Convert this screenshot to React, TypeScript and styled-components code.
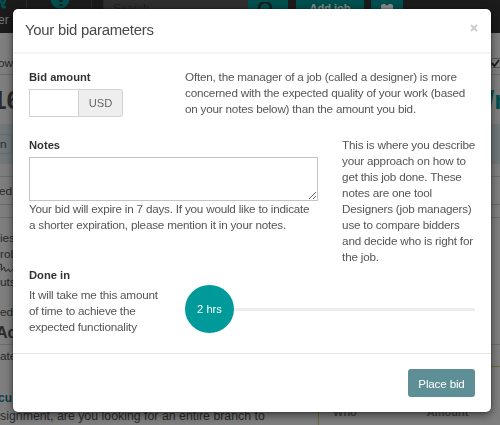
import React from "react";
import styled, { createGlobalStyle } from "styled-components";

const Global = createGlobalStyle`
  * { box-sizing: border-box; }
  html, body { margin: 0; height: 100%; overflow: hidden; }
  body { background: #7f7f7f; font-family: "Liberation Sans", Arial, sans-serif; font-size: 11.2px; line-height: 16px; color: #555; }
`;

const Page = styled.div`
  height: 425px;
  overflow: hidden;
  color: #2a2a2a;
`;
const Navbar = styled.div`
  display: flex;
  height: 33px;
  background: #1b1b1b;
`;
const NavItem = styled.div<{ $w: number }>`
  width: ${p => p.$w}px;
  height: 33px;
  border-right: 1px solid #292929;
  color: #777;
  display: flex;
  flex-direction: column;
  align-items: center;
  overflow: hidden;
`;
const NavLabel = styled.span`
  align-self: flex-start;
  font-size: 12px;
  line-height: 16px;
  margin-left: -2px;
`;
const Search = styled.div`
  width: 144px;
  background: #2f2f2f;
  color: #202020;
  padding-left: 9px;
  font-size: 11.5px;
`;
const NavButton = styled.div<{ $w: number; $gap: number }>`
  width: ${p => p.$w}px;
  margin-right: ${p => p.$gap}px;
  background: #004f4e;
  color: #8a8a8a;
  font-weight: bold;
  font-size: 11px;
  line-height: 17px;
  text-align: center;
`;
const Row = styled.div<{ $h: number; $band?: boolean; $line?: boolean; $size?: number; $bold?: boolean; $tone?: string }>`
  display: flex;
  justify-content: space-between;
  align-items: center;
  height: ${p => p.$h}px;
  white-space: nowrap;
  background: ${p => (p.$band ? "#71787a" : "transparent")};
  border-bottom: ${p => (p.$line ? "1px solid #6c6c6c" : "0")};
  font-size: ${p => p.$size ?? 11.8}px;
  font-weight: ${p => (p.$bold ? "bold" : "normal")};
  color: ${p => p.$tone ?? "#2a2a2a"};
`;
const Shift = styled.span<{ $by: number }>`
  margin-left: -${p => p.$by}px;
`;
const Pill = styled.span`
  width: 13px;
  height: 20px;
  line-height: 19px;
  border: 1px solid #656b6d;
  border-left: 0;
  border-radius: 0 5px 5px 0;
`;
const Teal = styled.span`
  color: #00504f;
  width: 13px;
`;
const Script = styled.div`
  height: 13px;
  display: flex;
`;
const Columns = styled.div`
  display: flex;
  justify-content: space-between;
`;
const PageText = styled.div`
  width: 305px;
`;
const Line = styled.div`
  height: 16px;
  font-size: 12.3px;
  letter-spacing: 0.02px;
  white-space: nowrap;
`;
const BidTable = styled.div`
  width: 182px;
  height: 70px;
  border: 1px solid #6c6a2d;
  border-right: 0;
  display: flex;
  align-items: flex-start;
  gap: 70px;
  padding: 37px 0 0 14px;
  font-weight: bold;
  font-size: 11px;
  color: #454545;
`;

const Overlay = styled.div`
  position: fixed;
  inset: 0;
  padding: 9px 9px 13px 13px;
`;
const Dialog = styled.section`
  display: flex;
  flex-direction: column;
  width: 478px;
  height: 403px;
  background: #fff;
  border-radius: 5px;
  box-shadow: 0 3px 10px rgba(0, 0, 0, 0.55), 0 0 2px rgba(0, 0, 0, 0.5);
`;
const Header = styled.header`
  height: 45px;
  display: flex;
  justify-content: space-between;
  padding: 11px 12px 0 12px;
  border-bottom: 2px solid #f5f5f5;
`;
const Title = styled.h1`
  margin: 0;
  font-size: 14.9px;
  letter-spacing: -0.26px;
  font-weight: normal;
  line-height: 21px;
  color: #484848;
`;
const Close = styled.button`
  border: 0;
  padding: 0;
  width: 10px;
  height: 16px;
  background: none;
  display: flex;
  align-items: center;
  justify-content: center;
`;
const Body = styled.div`
  height: 299px;
  padding: 15px 16px 0;
`;
const AmountRow = styled.div`
  display: flex;
  height: 68px;
`;
const AmountCol = styled.div`
  width: 156px;
`;
const NotesRow = styled.div`
  display: flex;
  justify-content: space-between;
  height: 130px;
`;
const NotesCol = styled.div`
  width: 289px;
`;
const Label = styled.label<{ $h: number }>`
  display: block;
  height: ${p => p.$h}px;
  font-weight: bold;
  color: #333;
`;
const Help = styled.p`
  margin: 0;
  white-space: pre-line;
  font-size: 11.7px;
  letter-spacing: -0.21px;
  color: #555;
`;
const InputGroup = styled.div`
  display: flex;
  width: 94px;
  height: 28px;
`;
const AmountInput = styled.input`
  width: 49px;
  border: 1px solid #d2d2d2;
  border-right: 0;
  outline: 0;
`;
const Currency = styled.span`
  flex: 1;
  border: 1px solid #d2d2d2;
  border-radius: 0 3px 3px 0;
  background: #eee;
  color: #666;
  text-align: center;
  line-height: 27px;
`;
const Notes = styled.textarea`
  display: block;
  width: 289px;
  height: 44px;
  border: 1px solid #c4c4c4;
  outline: 0;
  resize: vertical;
`;
const DoneRow = styled.div`
  display: flex;
`;
const DoneCol = styled.div`
  width: 156px;
`;
const Slider = styled.div`
  flex: 1;
  height: 48px;
  margin-top: 18px;
  display: flex;
  align-items: center;
`;
const Knob = styled.div`
  width: 49px;
  height: 48px;
  border-radius: 50%;
  background: #009a9a;
  color: #fff;
  text-align: center;
  line-height: 48px;
`;
const Track = styled.div`
  flex: 1;
  height: 3px;
  background: #eee;
`;
const Footer = styled.footer`
  height: 59px;
  border-top: 1px solid #e4e4e4;
  display: flex;
  justify-content: flex-end;
  padding: 15px 16px 0;
`;
const Submit = styled.button`
  width: 67px;
  height: 28px;
  border: 0;
  padding: 0;
  border-radius: 3px;
  background: #5f8f96;
  color: #fff;
  font: 11.6px "Liberation Sans", Arial, sans-serif;
  letter-spacing: -0.15px;
`;

export default function App() {
  return (
    <>
      <Global />
      <Page>
        <Navbar>
          <NavItem $w={27}>
            <svg width="27" height="12"><path d="M0 0l3 5M5 0c0 3-3 4-3 7M2 7l4 0" stroke="#00504f" strokeWidth="2.5" fill="none" /></svg>
            <NavLabel>er</NavLabel>
          </NavItem>
          <NavItem $w={65}>
            <svg width="65" height="12"><circle cx="33" cy="-1" r="9.5" fill="#00504f" /><path d="M34 0v2M34 4v2" stroke="#1b1b1b" strokeWidth="3" /></svg>
          </NavItem>
          <NavItem $w={12} />
          <Search>Search</Search>
          <NavButton $w={40} $gap={8}>
            <svg width="40" height="10"><circle cx="17" cy="6" r="6" fill="none" stroke="#1b1b1b" strokeWidth="2.5" /></svg>
          </NavButton>
          <NavButton $w={68} $gap={7}>Add job</NavButton>
          <NavButton $w={32} $gap={0}>
            <svg width="32" height="12"><path d="M10 9V6c0-2 4-3 6 0 2-3 6-2 6 0v3z" fill="#8a8a8a" /></svg>
          </NavButton>
        </Navbar>
        <Row $h={18} />
        <Row $h={24} $line>
          <Shift $by={2}>ow</Shift>
          <svg width="10" height="12"><rect x="1.5" y="1.5" width="9" height="9" rx="1" fill="#858585" stroke="#555" /><path d="M2 6l2.5 3L9 3" stroke="#222" strokeWidth="2" fill="none" /></svg>
        </Row>
        <Row $h={49} $size={26} $bold><Shift $by={8}>16</Shift><Teal>/r</Teal></Row>
        <Row $h={40} $band><Pill>n</Pill></Row>
        <Row $h={13} $line />
        <Row $h={28} $line><Shift $by={1}>ed</Shift></Row>
        <Row $h={13} $line />
        <Row $h={11} />
        <Row $h={17}>ies</Row>
        <Row $h={15}>rob</Row>
        <Script><svg width="14" height="12"><path d="M0 4c3-5 0 8 2 5s2-5 3 0 3-4 4 0 2 0 4-1" stroke="#222" fill="none" /></svg></Script>
        <Row $h={16}>uts</Row>
        <Row $h={12} />
        <Row $h={19}>ed</Row>
        <Row $h={24} $size={16} $bold $line><Shift $by={4}>Ac</Shift></Row>
        <Row $h={21}>ate</Row>
        <Columns>
          <PageText>
            <Row $h={22} />
            <Row $h={20} $bold $size={12} $tone="#123f49"><Shift $by={2}>cu</Shift></Row>
            <Line>signment, are you looking for an entire branch to</Line>
            <Line>would it be acceptable for a class based on the existing</Line>
          </PageText>
          <BidTable><span>Who</span><span>Amount</span></BidTable>
        </Columns>
      </Page>
      <Overlay>
        <Dialog>
          <Header>
            <Title>Your bid parameters</Title>
            <Close aria-label="Close">
              <svg width="8" height="8"><path d="M1 1l6 6M7 1l-6 6" stroke="#ccc" strokeWidth="1.8" /></svg>
            </Close>
          </Header>
          <Body>
            <AmountRow>
              <AmountCol>
                <Label $h={20}>Bid amount</Label>
                <InputGroup><AmountInput /><Currency>USD</Currency></InputGroup>
              </AmountCol>
              <Help>{"Often, the manager of a job (called a designer) is more\nconcerned with the expected quality of your work (based\non your notes below) than the amount you bid."}</Help>
            </AmountRow>
            <NotesRow>
              <NotesCol>
                <Label $h={20}>Notes</Label>
                <Notes />
                <Help>{"Your bid will expire in 7 days. If you would like to indicate\na shorter expiration, please mention it in your notes."}</Help>
              </NotesCol>
              <Help>{"This is where you describe\nyour approach on how to\nget this job done. These\nnotes are one tool\nDesigners (job managers)\nuse to compare bidders\nand decide who is right for\nthe job."}</Help>
            </NotesRow>
            <DoneRow>
              <DoneCol>
                <Label $h={20}>Done in</Label>
                <Help>{"It will take me this amount\nof time to achieve the\nexpected functionality"}</Help>
              </DoneCol>
              <Slider><Knob>2 hrs</Knob><Track /></Slider>
            </DoneRow>
          </Body>
          <Footer><Submit>Place bid</Submit></Footer>
        </Dialog>
      </Overlay>
    </>
  );
}
